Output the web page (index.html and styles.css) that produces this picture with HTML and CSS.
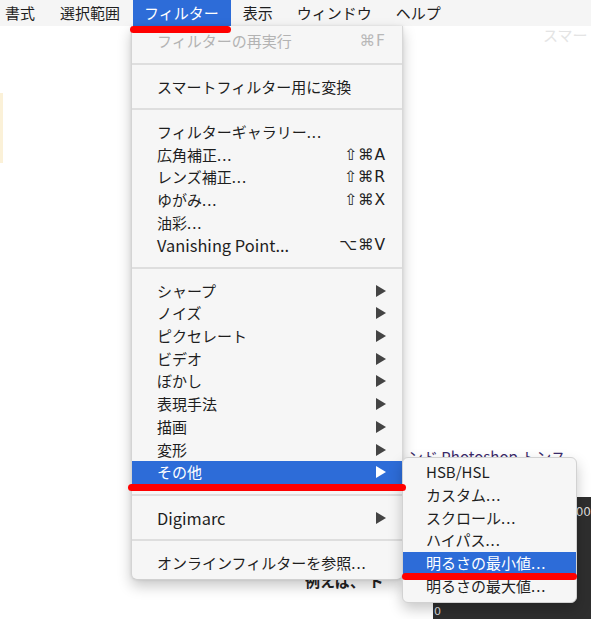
FILE: index.html
```html
<!DOCTYPE html>
<html lang="ja">
<head>
<meta charset="utf-8">
<link rel="stylesheet" href="styles.css">
</head>
<body>
<div class="page">
  <div class="menubar">
    <span class="mb-item first">書式</span>
    <span class="mb-item">選択範囲</span>
    <span class="mb-item active">フィルター</span>
    <span class="mb-item">表示</span>
    <span class="mb-item">ウィンドウ</span>
    <span class="mb-item">ヘルプ</span>
  </div>

  <div class="backdrop">
    <div class="bg-left"></div>
    <div class="bg-faint">スマー</div>
    <div class="bg-link-clip"><div class="bg-link">ンド Photoshop トンス</div></div>
    <div class="bg-dark"><span class="ruler-num">0</span><span class="ruler-top">00</span></div>
    <div class="bg-text-clip"><div class="bg-text">例えば、 ト</div></div>
  </div>

  <div class="menu main">
    <div class="row disabled"><span class="label">フィルターの再実行</span><span class="key">⌘F</span></div>
    <div class="sep"></div>
    <div class="row"><span class="label">スマートフィルター用に変換</span></div>
    <div class="sep"></div>
    <div class="row"><span class="label">フィルターギャラリー<span class="dots">...</span></span></div>
    <div class="row"><span class="label">広角補正<span class="dots">...</span></span><span class="key">⇧⌘A</span></div>
    <div class="row"><span class="label">レンズ補正<span class="dots">...</span></span><span class="key">⇧⌘R</span></div>
    <div class="row"><span class="label">ゆがみ<span class="dots">...</span></span><span class="key">⇧⌘X</span></div>
    <div class="row"><span class="label">油彩<span class="dots">...</span></span></div>
    <div class="row"><span class="label lat">Vanishing Point...</span><span class="key">⌥⌘V</span></div>
    <div class="sep"></div>
    <div class="row"><span class="label">シャープ</span><svg class="arrow" viewBox="0 0 10 12"><path d="M0 0 L10 6 L0 12 Z"/></svg></div>
    <div class="row"><span class="label">ノイズ</span><svg class="arrow" viewBox="0 0 10 12"><path d="M0 0 L10 6 L0 12 Z"/></svg></div>
    <div class="row"><span class="label">ピクセレート</span><svg class="arrow" viewBox="0 0 10 12"><path d="M0 0 L10 6 L0 12 Z"/></svg></div>
    <div class="row"><span class="label">ビデオ</span><svg class="arrow" viewBox="0 0 10 12"><path d="M0 0 L10 6 L0 12 Z"/></svg></div>
    <div class="row"><span class="label">ぼかし</span><svg class="arrow" viewBox="0 0 10 12"><path d="M0 0 L10 6 L0 12 Z"/></svg></div>
    <div class="row"><span class="label">表現手法</span><svg class="arrow" viewBox="0 0 10 12"><path d="M0 0 L10 6 L0 12 Z"/></svg></div>
    <div class="row"><span class="label">描画</span><svg class="arrow" viewBox="0 0 10 12"><path d="M0 0 L10 6 L0 12 Z"/></svg></div>
    <div class="row"><span class="label">変形</span><svg class="arrow" viewBox="0 0 10 12"><path d="M0 0 L10 6 L0 12 Z"/></svg></div>
    <div class="row selected"><span class="label">その他</span><svg class="arrow" viewBox="0 0 10 12"><path d="M0 0 L10 6 L0 12 Z"/></svg></div>
    <div class="sep"></div>
    <div class="row"><span class="label lat">Digimarc</span><svg class="arrow" viewBox="0 0 10 12"><path d="M0 0 L10 6 L0 12 Z"/></svg></div>
    <div class="sep"></div>
    <div class="row"><span class="label">オンラインフィルターを参照<span class="dots">...</span></span></div>
  </div>

  <div class="menu sub">
    <div class="row"><span class="label">HSB/HSL</span></div>
    <div class="row"><span class="label">カスタム<span class="dots">...</span></span></div>
    <div class="row"><span class="label">スクロール<span class="dots">...</span></span></div>
    <div class="row"><span class="label">ハイパス<span class="dots">...</span></span></div>
    <div class="row selected"><span class="label">明るさの最小値<span class="dots">...</span></span></div>
    <div class="row"><span class="label">明るさの最大値<span class="dots">...</span></span></div>
  </div>

  <div class="mark mark-top"></div>
  <div class="mark mark-other"></div>
  <div class="mark mark-sub"></div>
</div>
</body>
</html>
```

FILE: styles.css
```css
* { box-sizing: border-box; }
html, body { margin: 0; padding: 0; background: #ffffff; }
body {
  font-family: "Noto Sans CJK JP", "Noto Sans", "DejaVu Sans", sans-serif;
  color: #222;
}
.page {
  position: relative;
  width: 591px;
  height: 619px;
  overflow: hidden;
  background: #fff;
}

/* menu bar */
.menubar {
  display: flex;
  height: 26px;
  background: #f5f5f5;
  align-items: stretch;
}
.mb-item {
  display: flex;
  align-items: center;
  padding: 0 12px;
  font-size: 15px;
  line-height: 26px;
  color: #1e1e1e;
  white-space: nowrap;
}
.mb-item.first { padding-left: 5px; padding-right: 13px; }
.mb-item.active {
  background: #2d6cd8;
  color: #fff;
  padding: 0 12px 0 11px;
  margin-left: 1px;
}

/* backdrop content */
.backdrop {
  position: relative;
  height: 593px;
}
.bg-left {
  position: absolute;
  left: 0; top: 67px;
  width: 3px; height: 70px;
  background: #fbf1d8;
}
.bg-faint {
  position: absolute;
  left: 543px; top: -2px;
  font-size: 15px;
  color: #e4e4e4;
}
.bg-link-clip {
  position: absolute;
  left: 404px; top: 421px;
  width: 187px; height: 10px;
  overflow: hidden;
}
.bg-link {
  padding-left: 4px;
  font-size: 15px;
  line-height: 20px;
  color: #3b2a6a;
  white-space: nowrap;
}
.bg-dark {
  position: absolute;
  left: 433px; top: 471px;
  width: 158px; height: 122px;
  background: #2e2e2e;
  color: #ddd;
}
.ruler-top {
  position: absolute;
  right: 0; top: 8px;
  font-size: 12px;
  line-height: 14px;
  font-family: "DejaVu Sans", sans-serif;
}
.ruler-num {
  position: absolute;
  left: 1px; bottom: 0;
  font-size: 11px;
  line-height: 14px;
  font-family: "DejaVu Sans", sans-serif;
}
.bg-text-clip {
  position: absolute;
  left: 305px; top: 554px;
  width: 95px; height: 12px;
  overflow: hidden;
}
.bg-text {
  margin-top: -10px;
  font-size: 15px;
  line-height: 22px;
  font-weight: 700;
  color: #222;
  white-space: nowrap;
}

/* menus */
.menu {
  position: absolute;
  background: #f6f6f6;
  font-size: 15px;
  color: #1e1e1e;
}
.menu.main {
  left: 131px; top: 26px;
  width: 272px;
  padding: 3.8px 0 5px 0;
  border-left: 1px solid #d4d4d4;
  border-right: 1px solid #d8d8d8;
  border-bottom: 1px solid #d0d0d0;
  border-radius: 0 0 6px 6px;
  box-shadow: 0 6px 14px rgba(0,0,0,0.22), 0 0 3px rgba(0,0,0,0.1);
}
.menu.sub {
  left: 402px; top: 457px;
  width: 175px;
  padding: 3px 0 5px 0;
  border: 1px solid #d2d2d2;
  border-radius: 6px;
  box-shadow: 0 6px 14px rgba(0,0,0,0.22);
}
.row {
  display: flex;
  align-items: center;
  height: 22.7px;
  padding: 0 16px 0 25px;
  white-space: nowrap;
}
.menu.sub .row { padding-left: 23px; }
.row .label { flex: 1; line-height: 22px; }
.row .label.lat { font-size: 16.4px; }
.dots { letter-spacing: 1px; }
.row.disabled { color: #b3b3b3; }
.row.selected { background: #2d6cd8; color: #fff; }
.key {
  font-family: "DejaVu Sans", "Noto Sans", sans-serif;
  font-size: 15.5px;
  letter-spacing: 1px;
  color: #222;
}
.row.disabled .key { color: #b8b8b8; }
.arrow {
  width: 10px;
  height: 12px;
  fill: #444;
}
.row.selected .arrow { fill: #fff; }
.sep {
  height: 22.7px;
  display: flex;
  align-items: center;
}
.sep::before {
  content: "";
  display: block;
  width: 100%;
  height: 2px;
  background: #dedede;
}

/* red annotation marks */
.mark {
  position: absolute;
  background: #ff0000;
  height: 7px;
  border-radius: 4px;
}
.mark-top { left: 130px; top: 26px; width: 101px; }
.mark-other { left: 128px; top: 484px; width: 278px; }
.mark-sub { left: 402px; top: 573px; width: 175px; }
```
